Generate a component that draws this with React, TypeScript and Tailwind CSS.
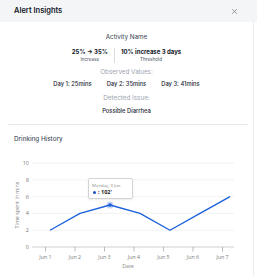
import React from 'react';

const days = ['Jun 1', 'Jun 2', 'Jun 3', 'Jun 4', 'Jun 5', 'Jun 6', 'Jun 7'];
const values = [2, 4, 5, 4, 2, 4, 6];

const yFor = (v: number) => 247 - v * 8.4;

function DrinkingChart() {
  const points = values.map((v, i) => `${50 + i * 30},${yFor(v)}`).join(' ');

  return (
    <div className="relative h-[132px] w-full">
      <svg width="257" height="132" viewBox="0 144 257 132" className="block">
        {/* grid */}
        {[2, 4, 6, 8, 10].map((v) => (
          <line key={v} x1="32" x2="234" y1={yFor(v)} y2={yFor(v)} stroke="#efefef" strokeWidth="0.8" />
        ))}
        {[0, 2, 4, 6, 8, 10].map((v) => (
          <text key={v} x="29" y={yFor(v) + 2} textAnchor="end" fontSize="5.5" fill="#777" fontFamily="Open Sans, sans-serif">
            {v}
          </text>
        ))}
        {/* x axis */}
        <line x1="32" x2="234" y1="247" y2="247" stroke="#cfcfcf" strokeWidth="1" />
        {days.map((d, i) => (
          <g key={d}>
            <line x1={45.5 + i * 29.5} x2={45.5 + i * 29.5} y1="247" y2="251.5" stroke="#aaa" strokeWidth="0.8" />
            <text x={45.5 + i * 29.5} y="259" textAnchor="middle" fontSize="5.3" fill="#777" fontFamily="Open Sans, sans-serif">
              {d}
            </text>
          </g>
        ))}
        <text x="128" y="268" textAnchor="middle" fontSize="5.3" fill="#888" fontFamily="Open Sans, sans-serif">
          Date
        </text>
        <text
          x="0"
          y="0"
          transform="translate(18.5 205) rotate(-90)"
          textAnchor="middle"
          fontSize="5.3"
          fill="#777"
          fontFamily="Open Sans, sans-serif"
        >
          Time spent in mins
        </text>
        {/* line */}
        <polyline points={points} fill="none" stroke="#1a5fdc" strokeWidth="1.3" strokeLinejoin="round" />
        <circle cx="110" cy={yFor(5)} r="3.5" fill="#1a5fdc" opacity="0.25" />
        <circle cx="110" cy={yFor(5)} r="1.8" fill="#1a5fdc" />
      </svg>

      {/* tooltip */}
      <div className="absolute left-[88px] top-[34px] w-[45px] h-[21px] bg-white border border-[#d4d4d4] rounded-[2px] shadow-[0_1px_2px_rgba(0,0,0,0.08)] px-[3px] pt-[3px] font-['Open_Sans',sans-serif]">
        <div className="text-[4.3px] leading-[6px] text-[#8a8a8a]">Monday, 3 Jun</div>
        <div className="flex items-center gap-[2px] mt-[1px]">
          <span className="w-[3px] h-[3px] rounded-full bg-[#1a4fc0] ml-[1px]"></span>
          <span className="text-[5.5px] leading-[7px] font-bold text-[#222]">: 102'</span>
        </div>
      </div>
    </div>
  );
}

export default function App() {
  return (
    <div className="w-[257px] h-[276px] bg-white overflow-hidden font-['Inter',sans-serif]">
      {/* Header */}
      <div className="h-[22px] bg-[#f4f5f7] flex items-center justify-between pl-[14px] pr-[20px]">
        <span className="text-[7.5px] leading-[10px] font-semibold text-[#111827]">Alert Insights</span>
        <svg width="5" height="5" viewBox="0 0 10 10" className="text-[#6b7280]">
          <path d="M1 1L9 9M9 1L1 9" stroke="currentColor" strokeWidth="1.4" strokeLinecap="round" />
        </svg>
      </div>

      <div className="w-[254px] h-[254px] border-r border-[#ededed]">
        {/* Summary */}
        <div className="flex flex-col items-center text-center">
          <div className="mt-[10px] text-[6.3px] leading-[10px] text-[#374151]">Activity Name</div>

          <div className="mt-[6px] flex items-center justify-center gap-[6px]">
            <div className="flex flex-col items-center">
              <span className="text-[6px] leading-[8px] font-bold text-[#111827]">25% → 35%</span>
              <span className="text-[4.6px] leading-[7px] text-[#4b5563]">Increase</span>
            </div>
            <div className="w-px h-[15px] bg-[#d9dbe0]"></div>
            <div className="flex flex-col items-center">
              <span className="text-[6px] leading-[8px] font-bold text-[#111827]">10% increase 3 days</span>
              <span className="text-[4.6px] leading-[7px] text-[#4b5563]">Threshold</span>
            </div>
          </div>

          <div className="mt-[5px] text-[6.3px] leading-[9px] text-[#9ca3af]">Observed Values:</div>
          <div className="mt-[3px] flex justify-center gap-[15px] text-[5.8px] leading-[8px] font-medium text-[#1f2937]">
            <span>Day 1: 25mins</span>
            <span>Day 2: 35mins</span>
            <span>Day 3: 41mins</span>
          </div>

          <div className="mt-[6px] text-[6.3px] leading-[9px] text-[#9ca3af]">Detected Issue:</div>
          <div className="mt-[4px] text-[5.8px] leading-[8px] font-medium text-[#1f2937]">Possible Diarrhea</div>
        </div>

        <div className="mt-[9px] ml-[8px] mr-[5px] h-px bg-[#e5e7eb]"></div>

        {/* Drinking History */}
        <div className="mt-[10px] pl-[14px] text-[6.3px] leading-[9px] font-medium text-[#4b5563]">Drinking History</div>
        <DrinkingChart />
      </div>
    </div>
  );
}
